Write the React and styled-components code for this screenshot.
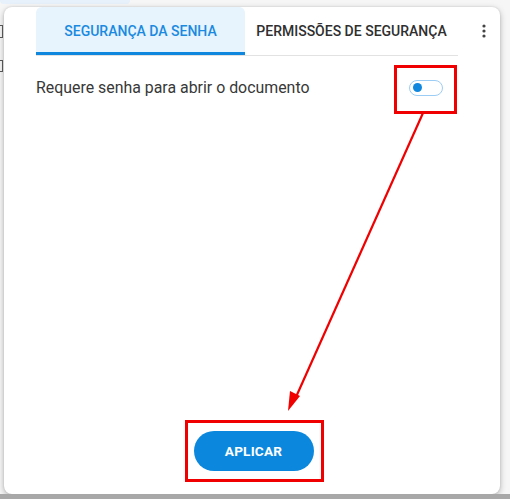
import React, { useState } from "react";
import styled, { createGlobalStyle } from "styled-components";

const Global = createGlobalStyle`
  html, body { margin: 0; padding: 0; }
  body { font-family: Roboto, "Liberation Sans", Arial, sans-serif; background: #f4f4f4; }
  * { box-sizing: border-box; }
`;

const Page = styled.div`
  position: relative;
  width: 510px;
  height: 499px;
  overflow: hidden;
  background: #f6f6f6;
  display: flex;
  flex-direction: column;
`;

const TopStrip = styled.div`
  height: 7px;
  display: flex;
  flex-shrink: 0;
`;

const TopPill = styled.div`
  width: 130px;
  height: 4px;
  background: #e6f1fb;
  border-radius: 0 0 6px 6px;
`;

const Middle = styled.div`
  flex: 1;
  display: flex;
  padding: 0 10px 0 4px;
`;

const BottomBar = styled.div`
  height: 5px;
  flex-shrink: 0;
  background: #a8a8a8;
`;

const Dialog = styled.div`
  flex: 1;
  background: #fff;
  border-radius: 8px;
  box-shadow: 0 2px 6px rgba(0, 0, 0, 0.28), 0 0 2px rgba(0, 0, 0, 0.12);
  display: flex;
  flex-direction: column;
  padding: 0 0 0 32px;
`;

const Header = styled.div`
  display: flex;
  align-items: stretch;
`;

const Tabs = styled.div`
  display: flex;
  width: 422px;
  border-bottom: 1px solid #e2e2e2;
`;

const Tab = styled.div`
  width: ${(p) => p.$w}px;
  height: 48px;
  display: flex;
  align-items: center;
  justify-content: center;
  font-size: 14px;
  font-weight: 500;
  color: ${(p) => (p.$active ? "#1a8ae0" : "#2f2f2f")};
  background: ${(p) => (p.$active ? "#e7f3fd" : "transparent")};
  border-radius: 6px 6px 0 0;
  border-bottom: 3px solid ${(p) => (p.$active ? "#0f87df" : "transparent")};
  padding-top: 3px;
  white-space: nowrap;
`;

const Kebab = styled.div`
  flex: 1;
  display: flex;
  align-items: flex-start;
  justify-content: center;
  padding-top: 17px;
  padding-left: 10px;
`;

const Content = styled.div`
  flex: 1;
  display: flex;
  flex-direction: column;
  padding-right: 48px;
`;

const Row = styled.div`
  display: flex;
  align-items: center;
  justify-content: space-between;
  margin-top: 22px;
  padding-right: 9px;
`;

const Label = styled.span`
  font-size: 15.9px;
  color: #383838;
`;

const Toggle = styled.button`
  width: 34px;
  height: 16px;
  border: 1px solid #9ccdf5;
  border-radius: 9px;
  background: #fff;
  padding: 0 0 0 3px;
  display: flex;
  align-items: center;
  cursor: pointer;
`;

const Knob = styled.span`
  width: 9px;
  height: 9px;
  border-radius: 50%;
  background: #0f87df;
`;

const Footer = styled.div`
  margin-top: auto;
  display: flex;
  justify-content: center;
  padding: 0 0 23px 19px;
`;

const ApplyButton = styled.button`
  width: 120px;
  height: 40px;
  border: none;
  border-radius: 20px;
  background: #0b88dd;
  color: #fff;
  font-family: Roboto, "Liberation Sans", Arial, sans-serif;
  font-size: 13.6px;
  font-weight: 700;
  letter-spacing: 0.2px;
  cursor: pointer;
`;

const Annotation = styled.div`
  position: absolute;
  left: ${(p) => p.$x}px;
  top: ${(p) => p.$y}px;
  width: ${(p) => p.$w}px;
  height: ${(p) => p.$h}px;
  border: 3px solid #f00000;
  pointer-events: none;
`;

const ArrowLayer = styled.svg`
  position: absolute;
  left: 0;
  top: 0;
  pointer-events: none;
`;

const SideMark = styled.div`
  position: absolute;
  left: 0;
  top: ${(p) => p.$y}px;
  width: 3px;
  height: ${(p) => p.$h}px;
  border: 1.5px solid #555;
  border-left: none;
`;

export default function App() {
  const [on, setOn] = useState(false);
  return (
    <>
      <Global />
      <Page>
        <SideMark $y={25} $h={13} />
        <SideMark $y={60} $h={12} />
        <TopStrip>
          <TopPill />
        </TopStrip>
        <Middle>
          <Dialog>
            <Header>
              <Tabs>
                <Tab $active $w={209}>SEGURANÇA DA SENHA</Tab>
                <Tab $w={213}>PERMISSÕES DE SEGURANÇA</Tab>
              </Tabs>
              <Kebab>
                <svg width="4" height="14" viewBox="0 0 4 14">
                  <circle cx="2" cy="2" r="1.6" fill="#444" />
                  <circle cx="2" cy="7" r="1.6" fill="#444" />
                  <circle cx="2" cy="12" r="1.6" fill="#444" />
                </svg>
              </Kebab>
            </Header>
            <Content>
              <Row>
                <Label>Requere senha para abrir o documento</Label>
                <Toggle onClick={() => setOn(!on)} aria-label="toggle">
                  <Knob />
                </Toggle>
              </Row>
              <Footer>
                <ApplyButton>APLICAR</ApplyButton>
              </Footer>
            </Content>
          </Dialog>
        </Middle>
        <BottomBar />
        <Annotation $x={185} $y={420} $w={139} $h={62} />
        <Annotation $x={394} $y={65} $w={63} $h={49} />
        <ArrowLayer width="510" height="499" viewBox="0 0 510 499">
          <line x1="423" y1="113" x2="296" y2="397" stroke="#f00000" strokeWidth="2.2" />
          <polygon points="288,411 290,391 300,396" fill="#f00000" />
        </ArrowLayer>
      </Page>
    </>
  );
}
